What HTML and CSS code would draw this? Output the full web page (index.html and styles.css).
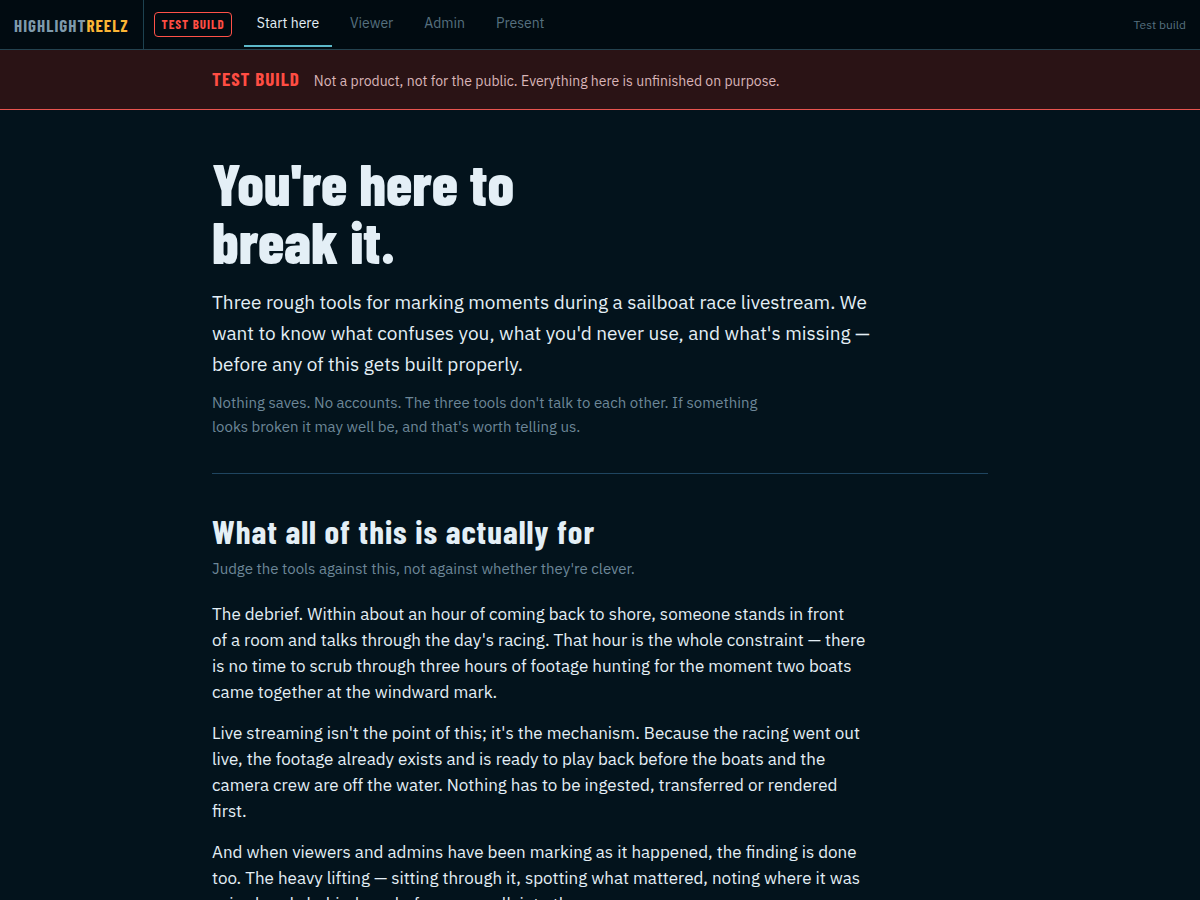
FILE: index.html
```html
<!DOCTYPE html>
<html lang="en">
<head>
    <meta charset="UTF-8">
    <meta name="viewport" content="width=device-width, initial-scale=1.0">
    <title>HighlightReelz - Start here</title>
    <link rel="stylesheet" href="styles.css">
</head>
<body>
    <header class="topbar">
        <a href="#" class="brand">HIGHLIGHT<span>REELZ</span></a>
        <span class="tag">TEST BUILD</span>
        <nav class="nav">
            <a href="#" class="active">Start here</a>
            <a href="#">Viewer</a>
            <a href="#">Admin</a>
            <a href="#">Present</a>
        </nav>
        <span class="status">Test build</span>
    </header>

    <div class="notice">
        <div class="wrap notice-row">
            <strong>TEST BUILD</strong>
            <span>Not a product, not for the public. Everything here is unfinished on purpose.</span>
        </div>
    </div>

    <main class="wrap">
        <!-- Intro -->
        <section class="hero">
            <h1>You're here to<br>break it.</h1>
            <p class="lede">Three rough tools for marking moments during a sailboat race livestream. We want to know what confuses you, what you'd never use, and what's missing — before any of this gets built properly.</p>
            <p class="note">Nothing saves. No accounts. The three tools don't talk to each other. If something looks broken it may well be, and that's worth telling us.</p>
        </section>

        <!-- Purpose -->
        <section class="purpose">
            <h2>What all of this is actually for</h2>
            <p class="sub">Judge the tools against this, not against whether they're clever.</p>
            <p>The debrief. Within about an hour of coming back to shore, someone stands in front<br>of a room and talks through the day's racing. That hour is the whole constraint — there is no time to scrub through three hours of footage hunting for the moment two boats came together at the windward mark.</p>
            <p>Live streaming isn't the point of this; it's the mechanism. Because the racing went out live, the footage already exists and is ready to play back before the boats and the camera crew are off the water. Nothing has to be ingested, transferred or rendered first.</p>
            <p>And when viewers and admins have been marking as it happened, the finding is done too. The heavy lifting — sitting through it, spotting what mattered, noting where it was — is already behind you before you walk into the room.</p>
        </section>
    </main>
</body>
</html>
```
FILE: styles.css
```css
* {
    margin: 0;
    padding: 0;
    box-sizing: border-box;
}

body {
    font-family: "IBM Plex Sans", Roboto, sans-serif;
    font-size: 17px;
    line-height: 26px;
    background-color: #03131c;
    color: #e4eff6;
}

.topbar {
    display: flex;
    align-items: center;
    height: 50px;
    padding-right: 14px;
    background: #010b11;
    border-bottom: 1px solid #24424f;
}

.brand,
.tag,
.notice strong,
h1,
h2 {
    font-family: "Barlow Condensed", "Roboto Condensed", "Liberation Sans Narrow", sans-serif;
    font-weight: 700;
}

.brand {
    display: flex;
    align-items: center;
    align-self: stretch;
    padding: 0 14px;
    border-right: 1px solid #1d4250;
    font-size: 17px;
    letter-spacing: 1px;
    color: #7f9aab;
    text-decoration: none;
}

.brand span {
    color: #fbb535;
}

.tag {
    margin: 0 12px 0 10px;
    padding: 0 6px 0 7px;
    border: 1px solid #ff5148;
    border-radius: 4px;
    font-size: 13px;
    line-height: 23px;
    letter-spacing: 1px;
    color: #ff4d43;
}

.nav {
    display: flex;
    gap: 5px;
}

.nav a {
    padding: 0 13px;
    border-bottom: 2px solid transparent;
    font-size: 14px;
    line-height: 43px;
    color: #56707f;
    text-decoration: none;
}

.nav a.active {
    color: #e4eff6;
    border-bottom-color: #5cb8c9;
}

.status {
    margin-left: auto;
    font-size: 12px;
    color: #56707f;
}

.wrap {
    width: 100%;
    max-width: 824px;
    margin: 0 auto;
    padding: 0 24px;
}

.notice {
    padding: 15px 0 14px;
    background: #2a1315;
    border-bottom: 1px solid #e85550;
}

.notice-row {
    display: flex;
    align-items: baseline;
    gap: 14px;
    line-height: 27px;
}

.notice strong {
    font-size: 19px;
    letter-spacing: 1px;
    color: #ff4d43;
}

.notice span {
    font-size: 14px;
    color: #d9b5b8;
}

.hero {
    padding: 44px 0 34px;
    border-bottom: 1px solid #1f4560;
}

h1 {
    font-size: 59px;
    font-weight: 800;
    line-height: 58px;
    margin-bottom: 17px;
}

.lede {
    max-width: 660px;
    margin-bottom: 11px;
    font-size: 19px;
    line-height: 31px;
}

.note {
    max-width: 580px;
    font-size: 15px;
    line-height: 24px;
    color: #6d8798;
}

.purpose {
    padding-top: 38px;
}

h2 {
    margin-bottom: 6px;
    font-size: 33px;
    line-height: 38px;
    letter-spacing: 1px;
}

.purpose p {
    max-width: 664px;
    margin-bottom: 15px;
}

.purpose .sub {
    margin-bottom: 19px;
    font-size: 15px;
    color: #6d8798;
}
```
